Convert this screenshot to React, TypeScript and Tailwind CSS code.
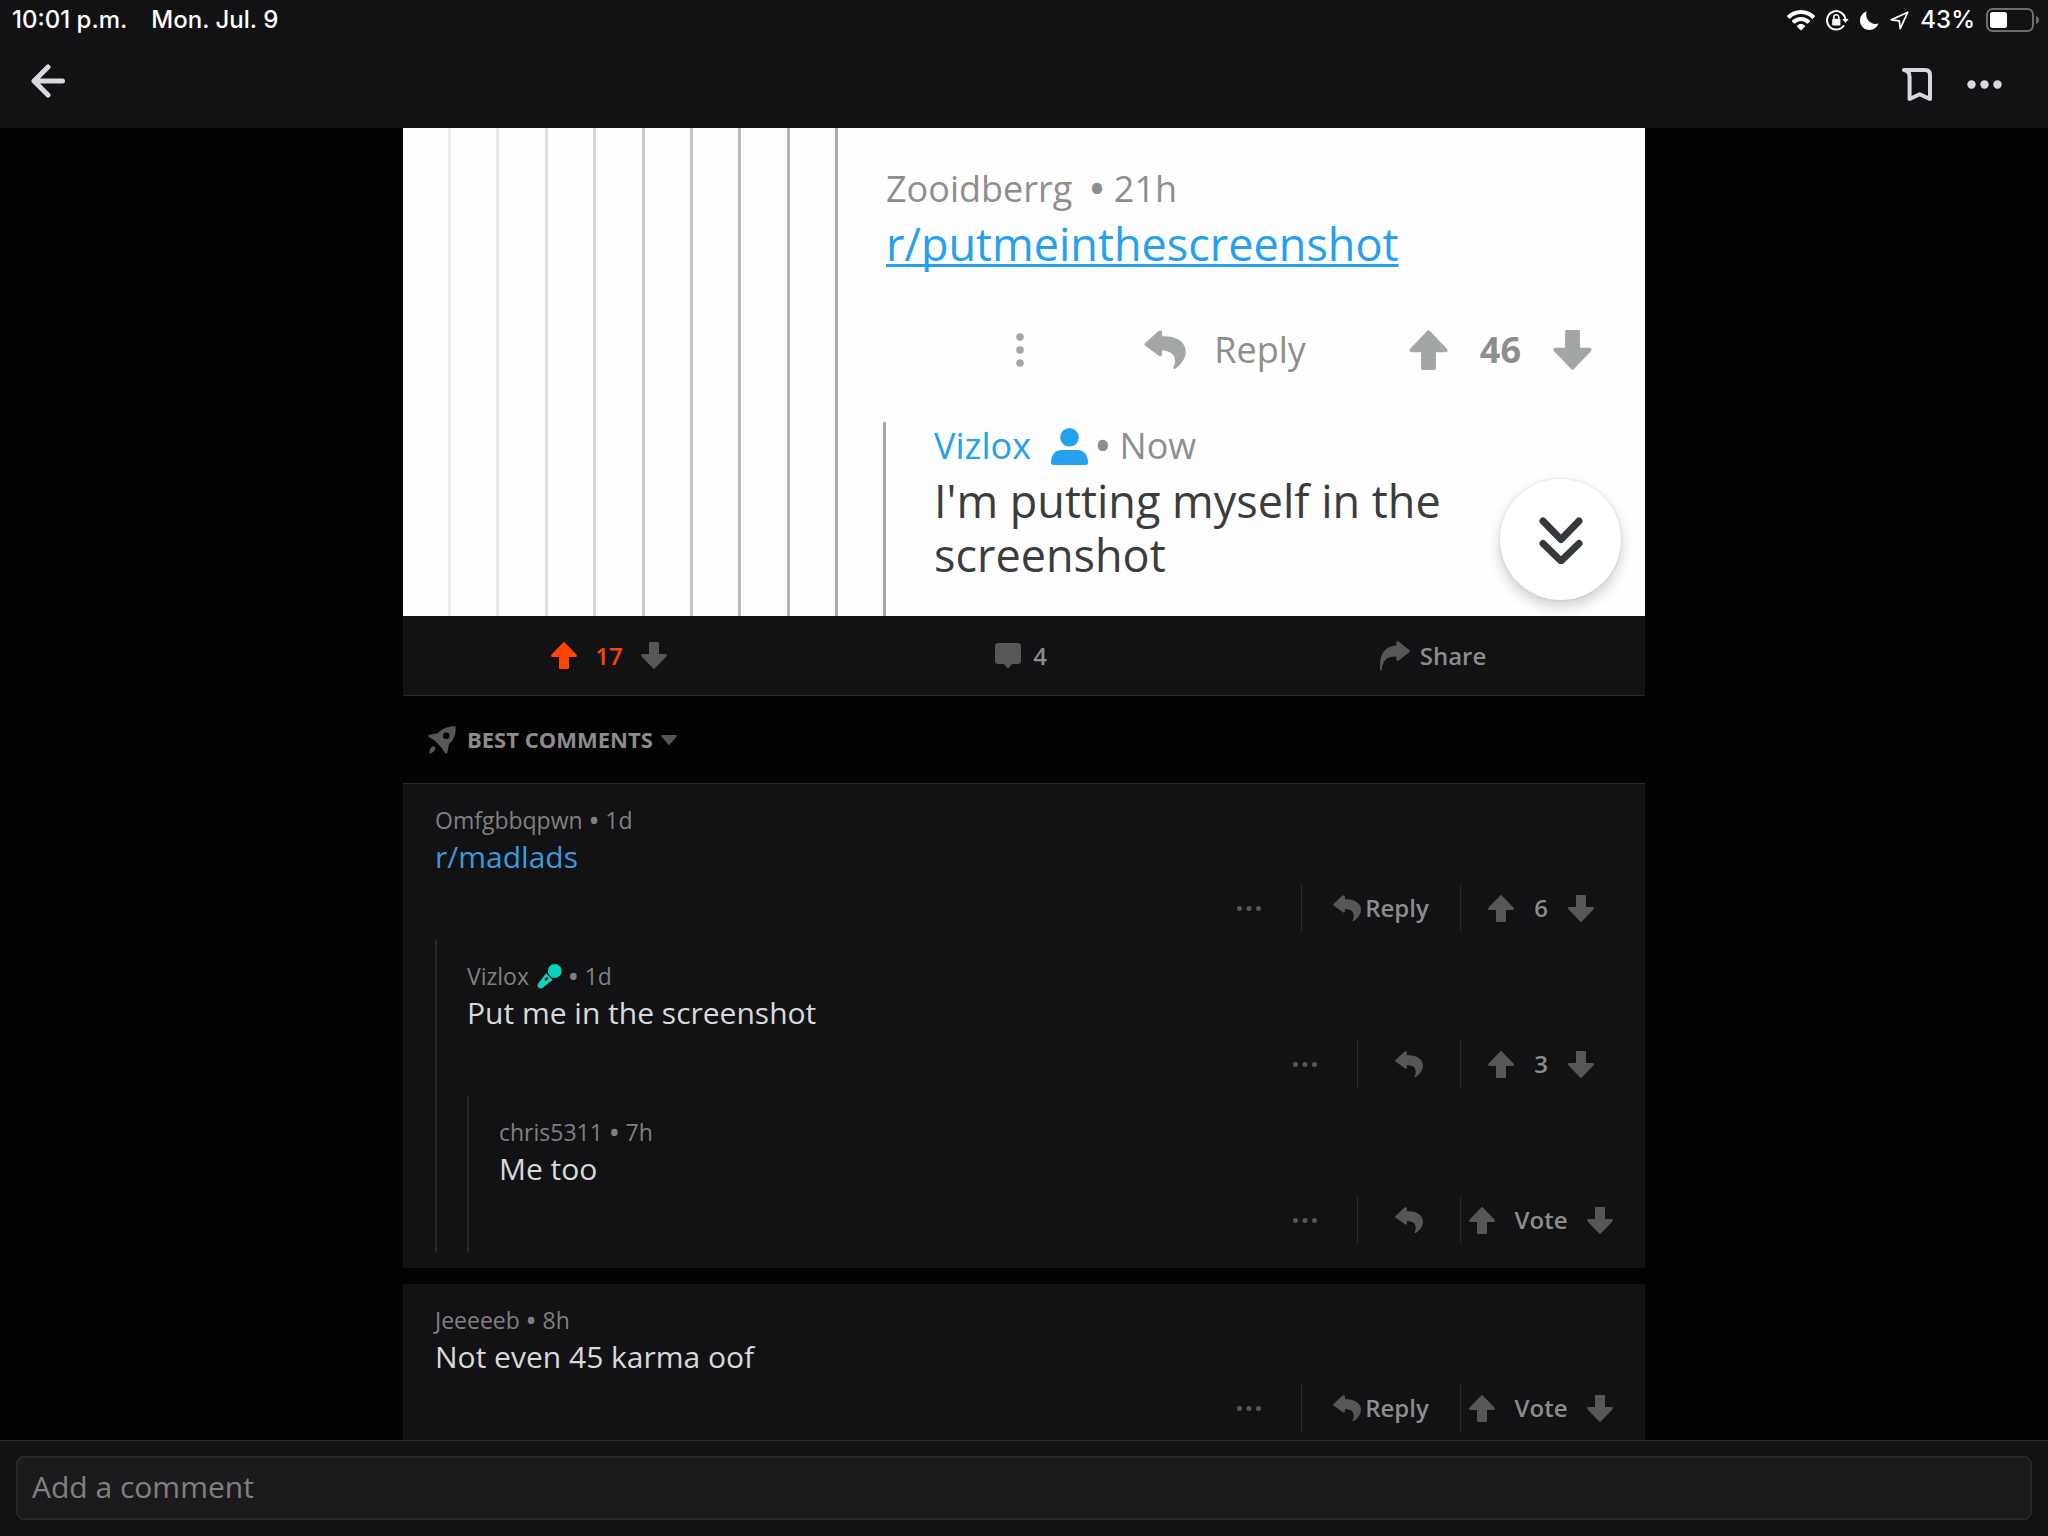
import React from "react";

interface Comment {
  id: number;
  author: string;
  age: string;
  text: string;
  votes: string;
  op?: boolean;
  link?: boolean;
  replies?: Comment[];
}

interface IconProps {
  className?: string;
}

const threads: Comment[] = [
  {
    id: 1,
    author: "Omfgbbqpwn",
    age: "1d",
    text: "r/madlads",
    votes: "6",
    link: true,
    replies: [
      {
        id: 2,
        author: "Vizlox",
        age: "1d",
        text: "Put me in the screenshot",
        votes: "3",
        op: true,
        replies: [{ id: 3, author: "chris5311", age: "7h", text: "Me too", votes: "Vote" }],
      },
    ],
  },
  { id: 4, author: "Jeeeeeb", age: "8h", text: "Not even 45 karma oof", votes: "Vote" },
];

const threadLines = [
  "bg-[#ededed]",
  "bg-[#e6e6e6]",
  "bg-[#dedede]",
  "bg-[#d4d4d4]",
  "bg-[#cacaca]",
  "bg-[#c6c6c6]",
  "bg-[#bababa]",
  "bg-[#b0b0b0]",
  "bg-[#ababab]",
];

const UpArrow = ({ className }: IconProps) => (
  <svg viewBox="0 0 26 27" className={className} fill="currentColor" aria-hidden="true">
    <path d="M12.2.5q.8-.8 1.6 0L25.4 12.6q1.4 2.2-1 2.4H18v11q0 1-1 1H9q-1 0-1-1V15H1.6q-2.4-.2-1-2.4z" />
  </svg>
);

const DownArrow = ({ className }: IconProps) => (
  <svg viewBox="0 0 26 27" className={className} fill="currentColor" aria-hidden="true">
    <path d="M12.2 26.5q.8.8 1.6 0L25.4 14.4q1.4-2.2-1-2.4H18V1q0-1-1-1H9Q8 0 8 1v11H1.6q-2.4.2-1 2.4z" />
  </svg>
);

const ReplyIcon = ({ className }: IconProps) => (
  <svg viewBox="0 0 28 27" className={className} fill="currentColor" aria-hidden="true">
    <path d="M.5 8.900 9.600.6Q12-.6 12 2v2.200C22 3.800 28 8 28 14.800c0 4.200-3.200 8.600-7.200 11.300-1 .5-1.500-.2-1-1.200 2.400-5.400.8-10.600-7.800-11V16q0 2.700-2.200 1.300L.5 10.500Q-.4 9.700.5 8.900z" />
  </svg>
);

const ShareIcon = ({ className }: IconProps) => (
  <svg viewBox="0 0 30 30" className={className} fill="currentColor" aria-hidden="true">
    <path d="M29.500 9.300 18.700.6Q16.300-.6 16.300 2v2.600C6 5 0 12.500 0 24v4.600q.6 2.400 1.800 0C2.800 19.500 7 15.200 16.300 15.600V18q0 2.600 2.400 1.400l10.800-8.500q.9-.8 0-1.600z" />
  </svg>
);

const RocketIcon = ({ className }: IconProps) => (
  <svg viewBox="0 0 28 28" className={className} fill="currentColor" aria-hidden="true">
    <path
      fillRule="evenodd"
      d="M26.400.2c.8 0 1.300.5 1.300 1.300.2 6.500-1.400 12-6.700 16.600l-1.600 8.400c-.3 1.200-1.600 1.400-2.300.4L13.200 21.200 6.600 14.600.9 11c-1-.7-.8-2 .4-2.300l8.600-1.500C14.200 2.200 20 .2 26.400.2zM18.200 6.400a3.300 3.300 0 1 0 0 6.600 3.300 3.300 0 0 0 0-6.600z"
    />
    <path d="M4 20.600c1.600-1.200 4.200.8 3.200 2.600-1 2.200-2.800 3.800-5 4.300-.7.100-1.100-.3-1-1 .4-2.400 1.400-4.600 2.800-5.900z" />
  </svg>
);

const MicIcon = ({ className }: IconProps) => (
  <svg viewBox="0 0 25 25" className={className} fill="currentColor" aria-hidden="true">
    <circle cx="17.800" cy="7" r="6.900" />
    <path
      fillRule="evenodd"
      d="m9.100 9.300 6.500 6.500-9.500 7.700c-1.500 1.300-3.300 1.300-4.600 0s-1.300-3.100 0-4.600zM9.900 12.900l-2.600 2.600 1.600 1.600 2.600-2.600z"
    />
  </svg>
);

const Dots = ({ className }: IconProps) => (
  <svg viewBox="0 0 24 5" className={className} fill="currentColor" aria-hidden="true">
    <circle cx="2.500" cy="2.500" r="2.500" />
    <circle cx="12" cy="2.500" r="2.500" />
    <circle cx="21.500" cy="2.500" r="2.500" />
  </svg>
);

const StatusBar = () => (
  <div className="flex h-10 items-center justify-between pl-3 pr-2 font-['Inter',sans-serif] text-[24px] font-medium leading-10 text-white">
    <div className="flex gap-6">
      <span>10:01 p.m.</span>
      <span>Mon. Jul. 9</span>
    </div>
    <div className="flex items-center gap-[11px]">
      {/* wifi */}
      <svg viewBox="0 0 28 21" className="h-[21px] w-7" fill="currentColor" aria-hidden="true">
        <path d="M14 0c5.400 0 10.200 2.100 13.700 5.500.4.400.4.800 0 1.200l-1.700 1.700c-.4.400-.8.400-1.200 0C22 5.600 18.200 4 14 4S6 5.600 3.200 8.400c-.4.400-.8.400-1.200 0L.3 6.700c-.4-.4-.4-.8 0-1.200C3.800 2.100 8.600 0 14 0z" />
        <path d="M14 7c3.400 0 6.500 1.300 8.800 3.500.4.400.4.800 0 1.200L21 13.400c-.4.400-.7.400-1.100 0-1.600-1.500-3.600-2.400-5.900-2.400s-4.300.9-5.900 2.400c-.4.400-.7.400-1.100 0l-1.800-1.700c-.4-.4-.4-.8 0-1.200C7.500 8.300 10.600 7 14 7z" />
        <path d="M14 14c1.500 0 2.900.6 3.900 1.500.4.400.4.800 0 1.200l-3.300 3.400c-.4.400-.8.400-1.200 0l-3.300-3.400c-.4-.4-.4-.8 0-1.200 1-.9 2.400-1.500 3.900-1.500z" />
      </svg>
      {/* rotation lock */}
      <svg viewBox="0 0 23 21" className="h-[21px] w-[23px]" fill="none" aria-hidden="true">
        <path d="M19.400 9.500A9.200 9.200 0 1 0 17.500 16" stroke="currentColor" strokeWidth="2" strokeLinecap="round" />
        <path d="M16.400 9h6.200l-3.100 4z" fill="currentColor" />
        <rect x="6.200" y="8.800" width="8.200" height="6.600" rx="1" fill="currentColor" />
        <path d="M7.800 9V7.300a2.500 2.500 0 0 1 5 0V9" stroke="currentColor" strokeWidth="1.500" />
      </svg>
      {/* do not disturb */}
      <svg viewBox="0 0 19 19" className="size-[19px]" fill="currentColor" aria-hidden="true">
        <path d="M6.600.2C4.600 7.200 9.800 14.600 18.600 12.600 16.800 16.600 13.600 19 9.600 19 4.200 19 0 14.800 0 9.500 0 5.300 2.600 1.700 6.600.2z" />
      </svg>
      {/* location */}
      <svg viewBox="0 0 19 19" className="size-[19px]" fill="none" aria-hidden="true">
        <path d="M17.800 1.200 1.400 8.800l7.900 1 .9 7.800z" stroke="currentColor" strokeWidth="1.700" strokeLinejoin="round" />
      </svg>
      <span>43%</span>
      {/* battery */}
      <svg viewBox="0 0 54 24" className="h-6 w-[54px]" fill="none" aria-hidden="true">
        <rect x="1" y="1" width="46" height="22" rx="5.500" stroke="#6f6f71" strokeWidth="2" />
        <rect x="4" y="4" width="17" height="16" rx="2.500" fill="#fff" />
        <path d="M50 8c4 1.300 4 6.700 0 8z" fill="#6f6f71" />
      </svg>
    </div>
  </div>
);

const Header = () => (
  <header className="sticky top-0 z-10 h-32 bg-[#121214]">
    <StatusBar />
    <div className="flex h-[88px] items-center justify-between pl-[31px] pr-[46px] text-[#d7dadc]">
      <button type="button" aria-label="Back">
        <svg viewBox="0 0 34 40" className="h-10 w-[34px]" fill="none" stroke="currentColor" strokeWidth="5" strokeLinecap="round" strokeLinejoin="round" aria-hidden="true">
          <path d="M31.500 17H3.500M17 3 3 17l14 14" />
        </svg>
      </button>
      <div className="flex items-center gap-[35px]">
        <button type="button" aria-label="Save">
          <svg viewBox="0 0 30 34" className="h-[34px] w-[30px]" fill="none" aria-hidden="true">
            <path d="M2 3H23q5 0 5 5V32L17.700 27.200 7.600 32V10Q7.600 3.600 2 3z" stroke="currentColor" strokeWidth="4" strokeLinejoin="round" />
          </svg>
        </button>
        <button type="button" aria-label="More options">
          <svg viewBox="0 0 35 9" className="h-[9px] w-[35px]" fill="currentColor" aria-hidden="true">
            <circle cx="4.500" cy="4.500" r="4.200" />
            <circle cx="17.500" cy="4.500" r="4.200" />
            <circle cx="30.500" cy="4.500" r="4.200" />
          </svg>
        </button>
      </div>
    </div>
  </header>
);

const PostImage = () => (
  <div className="relative flex h-[488px] bg-[#fefefe] text-[36px] leading-[48px] text-[#8e8e8f]">
    <div className="ml-[45px] flex w-[390px] shrink-0 justify-between">
      {threadLines.map((color) => (
        <span key={color} className={`w-[3px] ${color}`} />
      ))}
    </div>

    <div className="ml-[45px] flex flex-1 flex-col pt-[37px]">
      <div className="pl-[3px]">
        <p>
          Zooidberrg<span className="pl-[18px] pr-2.5 font-bold">•</span>21h
        </p>
        <a
          href="#putmeinthescreenshot"
          className="block text-[45px] leading-[62px] text-[#24a0ed] underline decoration-[3px] underline-offset-[3px] [text-decoration-skip-ink:none]"
        >
          r/putmeinthescreenshot
        </a>
      </div>

      <div className="mt-[51px] flex h-12 items-center justify-end pr-[53px] text-[#a3a6a7]">
        <button type="button" aria-label="Comment menu" className="mr-[120px]">
          <svg viewBox="0 0 8 34" className="h-[34px] w-2" fill="currentColor" aria-hidden="true">
            <circle cx="4" cy="4" r="3.800" />
            <circle cx="4" cy="17" r="3.800" />
            <circle cx="4" cy="30" r="3.800" />
          </svg>
        </button>
        <button type="button" className="mr-[103px] flex items-center gap-7">
          <ReplyIcon className="h-10 w-[42px]" />
          <span className="text-[#8e8e8f]">Reply</span>
        </button>
        <div className="flex items-center gap-8">
          <button type="button" aria-label="Upvote">
            <UpArrow className="h-10 w-[39px]" />
          </button>
          <span className="font-bold text-[#8e8e8f]">46</span>
          <button type="button" aria-label="Downvote">
            <DownArrow className="h-10 w-[39px]" />
          </button>
        </div>
      </div>

      <div className="mt-12 flex-1 border-l-[3px] border-[#a8a8a8] pl-12">
        <p className="flex items-center">
          <span className="text-[#24a0ed]">Vizlox</span>
          <svg viewBox="0 0 37 37" className="ml-5 mr-2 size-[37px] text-[#24a0ed]" fill="currentColor" aria-hidden="true">
            <circle cx="18.500" cy="9.300" r="9.300" />
            <path d="M11 22h15c6.500 0 11 4.500 11 12.500q0 2.500-2.500 2.500h-32Q0 37 0 34.500C0 26.500 4.500 22 11 22z" />
          </svg>
          <span className="pr-2.5 font-bold">•</span>Now
        </p>
        <p className="mt-1 max-w-[540px] text-[45px] leading-[54px] text-[#3a3c3e]">I'm putting myself in the screenshot</p>
      </div>
    </div>

    {/* floating button over the picture */}
    <button
      type="button"
      aria-label="Next comment"
      className="absolute bottom-4 right-6 flex size-[121px] items-center justify-center rounded-full bg-white shadow-[0_6px_14px_rgba(0,0,0,0.2),0_0_3px_rgba(0,0,0,0.1)]"
    >
      <svg viewBox="0 0 44 48" className="h-12 w-11" fill="none" stroke="#343a3c" strokeWidth="7" strokeLinecap="round" strokeLinejoin="round" aria-hidden="true">
        <path d="m4 5 18 18.500L40 5M4 27.500 22 45l18-17.500" />
      </svg>
    </button>
  </div>
);

const PostActions = () => (
  <div className="grid h-20 grid-cols-3 border-b border-[#2b2b2d] bg-[#121214] pr-1.5 text-[24px] font-semibold text-[#57575a]">
    <div className="flex items-center justify-center gap-[18px]">
      <button type="button" aria-label="Upvote" className="text-[#ff4500]">
        <UpArrow className="h-[27px] w-[26px]" />
      </button>
      <span className="text-[#ff4500]">17</span>
      <button type="button" aria-label="Downvote">
        <DownArrow className="h-[27px] w-[26px]" />
      </button>
    </div>
    <button type="button" className="flex items-center justify-center gap-3">
      <svg viewBox="0 0 26 26" className="size-[26px]" fill="currentColor" aria-hidden="true">
        <path d="M3 0h20q3 0 3 3v15q0 3-3 3h-6l-3.200 4q-.8.8-1.600 0L9 21H3q-3 0-3-3V3q0-3 3-3z" />
      </svg>
      <span className="text-[#8c8c8e]">4</span>
    </button>
    <button type="button" className="flex items-center justify-center gap-2.5">
      <ShareIcon className="size-[30px]" />
      <span className="text-[#8c8c8e]">Share</span>
    </button>
  </div>
);

const CommentItem: React.FC<{ comment: Comment; depth?: number }> = ({ comment, depth = 0 }) => (
  <>
    <div className="pb-2 pt-5">
      <p className="flex items-center text-[23px] leading-8 text-[#808082]">
        {comment.author}
        {comment.op && <MicIcon className="ml-2 size-[25px] text-[#0dd3bb]" />}
        <span className="px-[7px] font-bold">•</span>
        {comment.age}
      </p>
      {comment.link ? (
        <a href="#madlads" className="block text-[30px] leading-[42px] text-[#3b9ade]">
          {comment.text}
        </a>
      ) : (
        <p className="text-[30px] leading-[42px] text-[#d7dadc]">{comment.text}</p>
      )}

      <div className="mt-1.5 flex h-12 justify-end pr-6 text-[24px] font-semibold text-[#57575a]">
        <button type="button" aria-label="More" className="pr-10">
          <Dots className="h-[5px] w-6" />
        </button>
        <button
          type="button"
          aria-label="Reply"
          className={`flex items-center justify-center gap-1 border-x border-[#29292b] ${depth === 0 ? "w-[160px]" : "w-[104px]"}`}
        >
          <ReplyIcon className="h-[27px] w-7" />
          {depth === 0 && <span className="text-[#8c8c8e]">Reply</span>}
        </button>
        <div className="flex w-[160px] items-center justify-center gap-5">
          <button type="button" aria-label="Upvote">
            <UpArrow className="h-[27px] w-[26px]" />
          </button>
          <span className="text-[#8c8c8e]">{comment.votes}</span>
          <button type="button" aria-label="Downvote">
            <DownArrow className="h-[27px] w-[26px]" />
          </button>
        </div>
      </div>
    </div>

    {comment.replies?.map((reply) => (
      <div key={reply.id} className="border-l-2 border-[#29292b] pl-[30px]">
        <CommentItem comment={reply} depth={depth + 1} />
      </div>
    ))}
  </>
);

const App: React.FC = () => (
  <div className="flex min-h-screen flex-col bg-[#030303] font-['Open_Sans',sans-serif]">
    <Header />

    <main className="mx-auto w-full max-w-[1242px] flex-1">
      <PostImage />
      <PostActions />

      <button type="button" className="flex h-[87px] items-center pl-[25px] text-[22px] font-bold text-[#8c8c8e]">
        <RocketIcon className="mr-[11px] size-7 text-[#57575a]" />
        BEST COMMENTS
        <svg viewBox="0 0 16 10" className="ml-2 h-2.5 w-4 text-[#57575a]" fill="currentColor" aria-hidden="true">
          <path d="M1 0h14q1.500.3.600 1.600L9 9.200Q8 10.200 7 9.200L.4 1.600Q-.5.3 1 0z" />
        </svg>
      </button>

      <div className="flex flex-col gap-4 border-t border-[#2b2b2d]">
        {threads.map((thread) => (
          <article key={thread.id} className={`bg-[#121214] pl-8 ${thread.replies ? "pb-4" : ""}`}>
            <CommentItem comment={thread} />
          </article>
        ))}
      </div>
    </main>

    <footer className="sticky bottom-0 h-24 border-t border-[#2b2b2d] bg-[#121214] px-4 pt-[15px]">
      <input
        type="text"
        aria-label="Add a comment"
        placeholder="Add a comment"
        className="h-16 w-full rounded-lg border-2 border-[#28282a] bg-[#1b1b1d] px-3.5 pb-1 text-[30px] text-[#d7dadc] outline-none placeholder:text-[#808082]"
      />
    </footer>
  </div>
);

export default App;
